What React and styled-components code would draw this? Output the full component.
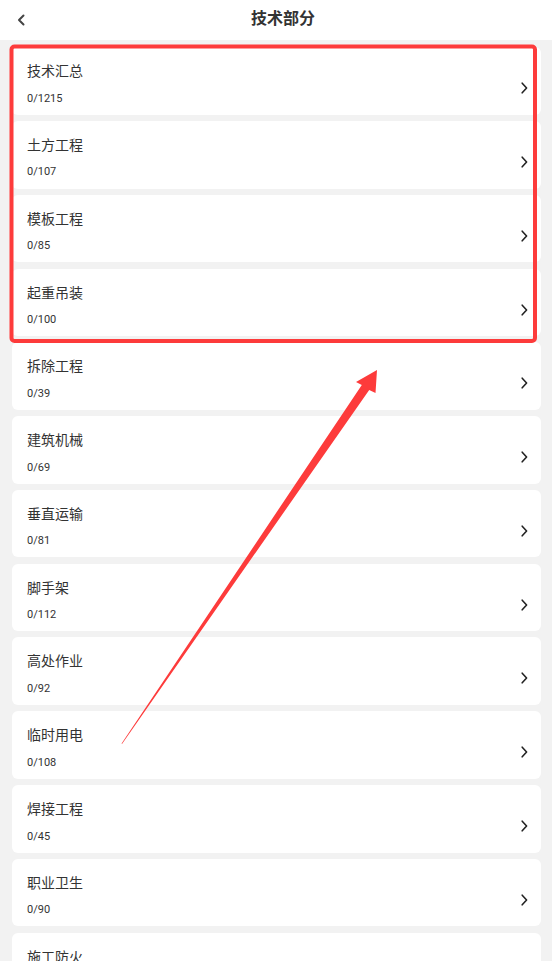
import styled, { createGlobalStyle } from 'styled-components';

const items = [
  { name: '技术汇总', done: 0, total: 1215 },
  { name: '土方工程', done: 0, total: 107 },
  { name: '模板工程', done: 0, total: 85 },
  { name: '起重吊装', done: 0, total: 100 },
  { name: '拆除工程', done: 0, total: 39 },
  { name: '建筑机械', done: 0, total: 69 },
  { name: '垂直运输', done: 0, total: 81 },
  { name: '脚手架', done: 0, total: 112 },
  { name: '高处作业', done: 0, total: 92 },
  { name: '临时用电', done: 0, total: 108 },
  { name: '焊接工程', done: 0, total: 45 },
  { name: '职业卫生', done: 0, total: 90 },
  { name: '施工防火', done: 0, total: 64 },
];

const GlobalStyle = createGlobalStyle`
  html, body {
    margin: 0;
    padding: 0;
    background: #f2f2f2;
    font-family: Roboto, "Noto Sans CJK SC", sans-serif;
  }
`;

const App = () => {
  return (
    <StPage>
      <GlobalStyle />
      <StHeader>
        <StBack aria-label="back">
          <svg width="9" height="12" viewBox="0 0 9 12">
            <path d="M6.5 1.5 L2 6 L6.5 10.5" fill="none" stroke="#444" strokeWidth="2" strokeLinecap="round" strokeLinejoin="round" />
          </svg>
        </StBack>
        <StTitle>技术部分</StTitle>
      </StHeader>
      <StList>
        {items.map((item) => (
          <StCard key={item.name}>
            <StInfo>
              <StName>{item.name}</StName>
              <StCount>
                {item.done}/{item.total}
              </StCount>
            </StInfo>
            <StArrow>
              <svg width="7" height="12" viewBox="0 0 7 12">
                <path d="M1.2 1.2 L5.6 6 L1.2 10.8" fill="none" stroke="#222" strokeWidth="1.6" strokeLinecap="round" strokeLinejoin="round" />
              </svg>
            </StArrow>
          </StCard>
        ))}
      </StList>
      {/* red annotation drawn over the list */}
      <StOverlay width="552" height="961" viewBox="0 0 552 961">
        <rect x="11.5" y="46.5" width="523.5" height="294.5" rx="3" fill="none" stroke="#fd3b3b" strokeWidth="4" />
        <polygon
          points="377,370 375.5,393 369.2,390 122,744 121.6,743.5 361.8,385 356,382"
          fill="#fd3b3b"
        />
      </StOverlay>
    </StPage>
  );
};

const StPage = styled.div`
  position: relative;
  width: 552px;
  min-height: 961px;
  background: #f2f2f2;
  overflow: hidden;
`;

const StHeader = styled.header`
  height: 40px;
  background: #fff;
  display: flex;
  align-items: center;
  justify-content: center;
  padding-left: 14px;
  position: relative;
`;

const StBack = styled.button`
  position: absolute;
  left: 17px;
  top: 14px;
  padding: 0;
  border: none;
  background: none;
  display: flex;
`;

const StTitle = styled.h1`
  margin: 0;
  font-size: 16px;
  font-weight: 700;
  color: #333;
  line-height: 40px;
  margin-top: -2px;
`;

const StList = styled.div`
  display: flex;
  flex-direction: column;
  gap: 6.2px;
  padding: 7.2px 11px 0 12px;
`;

const StCard = styled.div`
  height: 67.6px;
  box-sizing: border-box;
  background: #fff;
  border-radius: 6px;
  display: flex;
  padding: 14px 13px 0 15px;
`;

const StInfo = styled.div`
  flex: 1;
  display: flex;
  flex-direction: column;
`;

const StName = styled.div`
  font-size: 14px;
  line-height: 20px;
  color: #333;
`;

const StCount = styled.div`
  margin-top: 9.5px;
  font-size: 11px;
  line-height: 15px;
  color: #333;
`;

const StArrow = styled.div`
  display: flex;
  padding-top: 21px;
  height: 12px;
`;

const StOverlay = styled.svg`
  position: absolute;
  left: 0;
  top: 0;
  pointer-events: none;
`;

export default App;
